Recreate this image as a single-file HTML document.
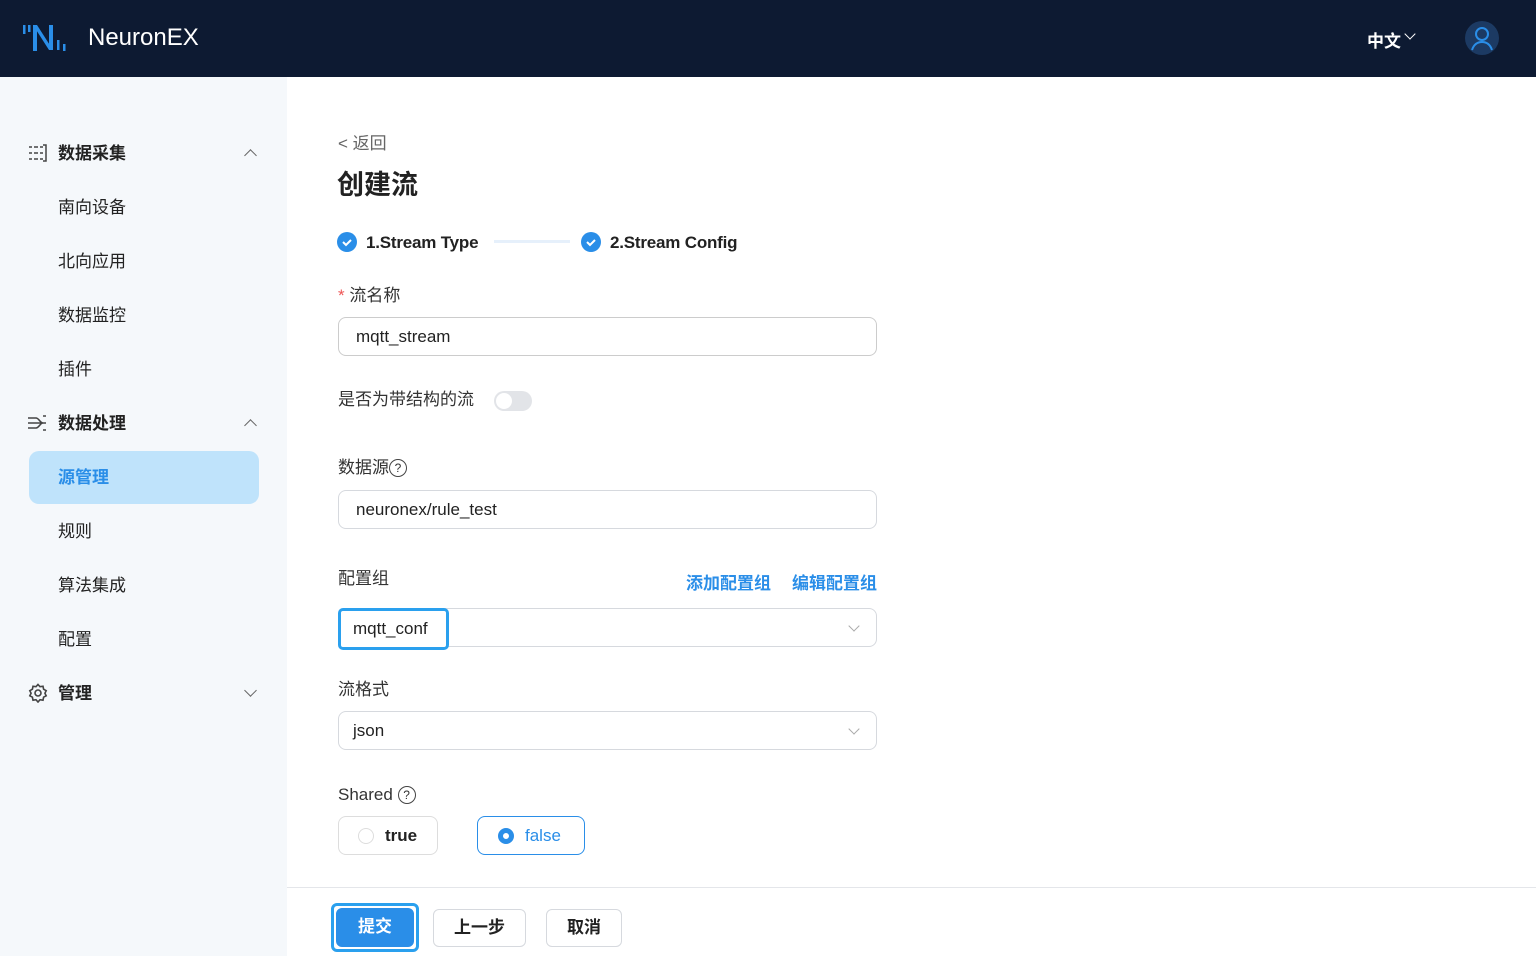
<!DOCTYPE html>
<html><head><meta charset="utf-8"><style>
*{margin:0;padding:0;box-sizing:border-box}
body{width:1536px;height:956px;overflow:hidden;background:#fff;font-family:"Liberation Sans","Noto Sans CJK SC",sans-serif;color:#333;position:relative}
.a{position:absolute}
.hdr{left:0;top:0;width:1536px;height:77px;background:#0d1a32}
.side{left:0;top:77px;width:287px;height:879px;background:#f5f8fb}
.mi{position:absolute;left:58px;font-size:17px;color:#222;line-height:20px}
.grp{font-weight:bold}
.chev{position:absolute;left:246px;width:9px;height:9px;border-left:1.3px solid #666;border-top:1.3px solid #666}
.lbl{position:absolute;left:338px;font-size:17px;color:#333;line-height:20px}
.inp{position:absolute;left:338px;width:539px;height:39px;border:1px solid #d6d9de;border-radius:8px;font-size:17px;color:#222;padding-left:17px;line-height:37px}
.dd{position:absolute;right:18px;top:13px;width:8px;height:8px;border-right:1px solid #aaa;border-bottom:1px solid #aaa;transform:rotate(45deg)}
.btn{position:absolute;top:909px;height:38px;border:1px solid #d6d9de;border-radius:6px;font-size:17px;font-weight:bold;text-align:center;line-height:36px;color:#222}
</style></head><body>
<div class="a hdr">
 <svg class="a" style="left:22px;top:22px" width="56" height="32" viewBox="0 0 56 32">
  <g fill="#2a8ee8"><rect x="1" y="3" width="2.5" height="9"/><rect x="6" y="3" width="2.5" height="7"/>
  <polygon points="11,3 15,3 15,29 11,29"/><polygon points="11,3 15,3 31,28 27,28"/><polygon points="27,3 31,3 31,28 27,28"/>
  <rect x="35" y="18" width="2.5" height="10"/><rect x="41" y="22" width="2.5" height="7"/></g></svg>
 <div class="a" style="left:88px;top:23px;font-size:24px;color:#fff;line-height:30px">NeuronEX</div>
 <div class="a" style="left:1367px;top:27px;font-size:17px;color:#fff;font-weight:bold">中文</div>
 <div class="a" style="left:1406px;top:30px;width:8px;height:8px;border-right:1.5px solid #fff;border-bottom:1.5px solid #fff;transform:rotate(45deg)"></div>
 <div class="a" style="left:1465px;top:21px;width:34px;height:34px;border-radius:50%;background:#1c3a63"></div>
 <svg class="a" style="left:1465px;top:21px" width="34" height="34" viewBox="0 0 34 34"><circle cx="17" cy="13" r="6" fill="none" stroke="#2a8ee8" stroke-width="2"/><path d="M7 29c2-6 6-8 10-8s8 2 10 8" fill="none" stroke="#2a8ee8" stroke-width="2"/></svg>
</div>
<div class="a side"></div>
<svg class="a" style="left:28px;top:144px" width="20" height="18" viewBox="0 0 20 18" fill="none" stroke="#444" stroke-width="1.5"><path d="M1 3h3M6 3h4M12 3h3M1 9h3M6 9h4M1 15h3M6 15h4M12 9h3M12 15h3M15 1h3v16h-3"/></svg>
<div class="mi grp" style="top:144px">数据采集</div><div class="chev" style="top:151px;transform:rotate(45deg)"></div>
<div class="mi" style="top:198px">南向设备</div>
<div class="mi" style="top:252px">北向应用</div>
<div class="mi" style="top:306px">数据监控</div>
<div class="mi" style="top:360px">插件</div>
<svg class="a" style="left:27px;top:414px" width="21" height="18" viewBox="0 0 21 18" fill="none" stroke="#444" stroke-width="1.6"><path d="M1 4h8M1 9h12M1 14h8M9 4c3 0 4 5 7 5M9 14c3 0 4-5 7-5M13 9h6M16 2h3M16 16h3"/></svg>
<div class="mi grp" style="top:414px">数据处理</div><div class="chev" style="top:421px;transform:rotate(45deg)"></div>
<div class="a" style="left:29px;top:451px;width:230px;height:53px;background:#bfe3fb;border-radius:10px"></div>
<div class="mi grp" style="top:468px;color:#2a8ee8">源管理</div>
<div class="mi" style="top:522px">规则</div>
<div class="mi" style="top:576px">算法集成</div>
<div class="mi" style="top:630px">配置</div>
<svg class="a" style="left:28px;top:683px" width="20" height="20" viewBox="0 0 20 20" fill="none" stroke="#444" stroke-width="1.6"><circle cx="10" cy="10" r="3"/><path d="M10 1.5l2 2.2 3-.4.6 2.9 2.6 1.5-1.3 2.5 1.3 2.6-2.6 1.4-.6 3-3-.5-2 2.3-2-2.3-3 .5-.6-3-2.6-1.4 1.3-2.6L1.8 7.7l2.6-1.5.6-2.9 3 .4z"/></svg>
<div class="mi grp" style="top:684px">管理</div><div class="chev" style="top:686px;transform:rotate(225deg)"></div>

<div class="a" style="left:338px;top:129px;font-size:17px;color:#666">&lt; 返回</div>
<div class="a" style="left:337px;top:163px;font-size:27px;font-weight:bold;color:#222">创建流</div>
<svg class="a" style="left:337px;top:232px" width="20" height="20"><circle cx="10" cy="10" r="10" fill="#2a8ee8"/><path d="M6 10l3 3 5-5" stroke="#fff" stroke-width="2" fill="none"/></svg>
<div class="a" style="left:366px;top:233px;font-size:17px;color:#222;font-weight:bold;letter-spacing:-0.2px">1.Stream Type</div>
<div class="a" style="left:494px;top:240px;width:76px;height:3px;background:#e6f0fb"></div>
<svg class="a" style="left:581px;top:232px" width="20" height="20"><circle cx="10" cy="10" r="10" fill="#2a8ee8"/><path d="M6 10l3 3 5-5" stroke="#fff" stroke-width="2" fill="none"/></svg>
<div class="a" style="left:610px;top:233px;font-size:17px;color:#222;font-weight:bold;letter-spacing:-0.2px">2.Stream Config</div>

<div class="lbl" style="top:286px"><span style="color:#e55">*</span> 流名称</div>
<div class="inp" style="top:317px;border-color:#ccc">mqtt_stream</div>
<div class="lbl" style="top:390px">是否为带结构的流</div>
<div class="a" style="left:494px;top:391px;width:38px;height:20px;border-radius:10px;background:#e2e4e8"><div class="a" style="left:2px;top:2px;width:16px;height:16px;border-radius:50%;background:#fff"></div></div>
<div class="lbl" style="top:458px">数据源<span style="display:inline-block;width:18px;height:18px;border:1.3px solid #444;border-radius:50%;font-size:12px;text-align:center;line-height:16px;vertical-align:1px">?</span></div>
<div class="inp" style="top:490px">neuronex/rule_test</div>
<div class="lbl" style="top:569px">配置组</div>
<div class="a" style="left:686px;top:569px;font-size:17px;color:#2a8ee8;font-weight:bold">添加配置组</div>
<div class="a" style="left:792px;top:569px;font-size:17px;color:#2a8ee8;font-weight:bold">编辑配置组</div>
<div class="inp" style="top:608px"><div class="dd"></div></div>
<div class="a" style="left:338px;top:608px;width:111px;height:42px;border:3px solid #2aa0ee;border-radius:5px;font-size:17px;line-height:36px;padding-left:12px;background:#fff;color:#222">mqtt_conf</div>
<div class="lbl" style="top:680px">流格式</div>
<div class="inp" style="top:711px;padding-left:14px">json<div class="dd"></div></div>
<div class="lbl" style="top:785px">Shared <span style="display:inline-block;width:18px;height:18px;border:1.3px solid #444;border-radius:50%;font-size:12px;text-align:center;line-height:16px;vertical-align:1px">?</span></div>
<div class="a" style="left:338px;top:816px;width:100px;height:39px;border:1px solid #ddd;border-radius:8px"></div>
<div class="a" style="left:358px;top:828px;width:16px;height:16px;border:1px solid #ddd;border-radius:50%"></div>
<div class="a" style="left:385px;top:826px;font-size:17px;color:#222;font-weight:bold">true</div>
<div class="a" style="left:477px;top:816px;width:108px;height:39px;border:1px solid #2a8ee8;border-radius:8px"></div>
<div class="a" style="left:498px;top:828px;width:16px;height:16px;border:5px solid #2a8ee8;border-radius:50%;background:#fff"></div>
<div class="a" style="left:525px;top:826px;font-size:17px;color:#2a8ee8">false</div>

<div class="a" style="left:287px;top:887px;width:1249px;height:1px;background:#e4e6ea"></div>
<div class="a" style="left:331px;top:903px;width:88px;height:49px;border:3px solid #2aa0ee;border-radius:6px"></div>
<div class="btn" style="left:336px;top:908px;width:78px;height:39px;background:#2a8ee8;border-color:#2a8ee8;color:#fff;border-radius:6px">提交</div>
<div class="btn" style="left:433px;width:93px">上一步</div>
<div class="btn" style="left:546px;width:76px">取消</div>
</body></html>
